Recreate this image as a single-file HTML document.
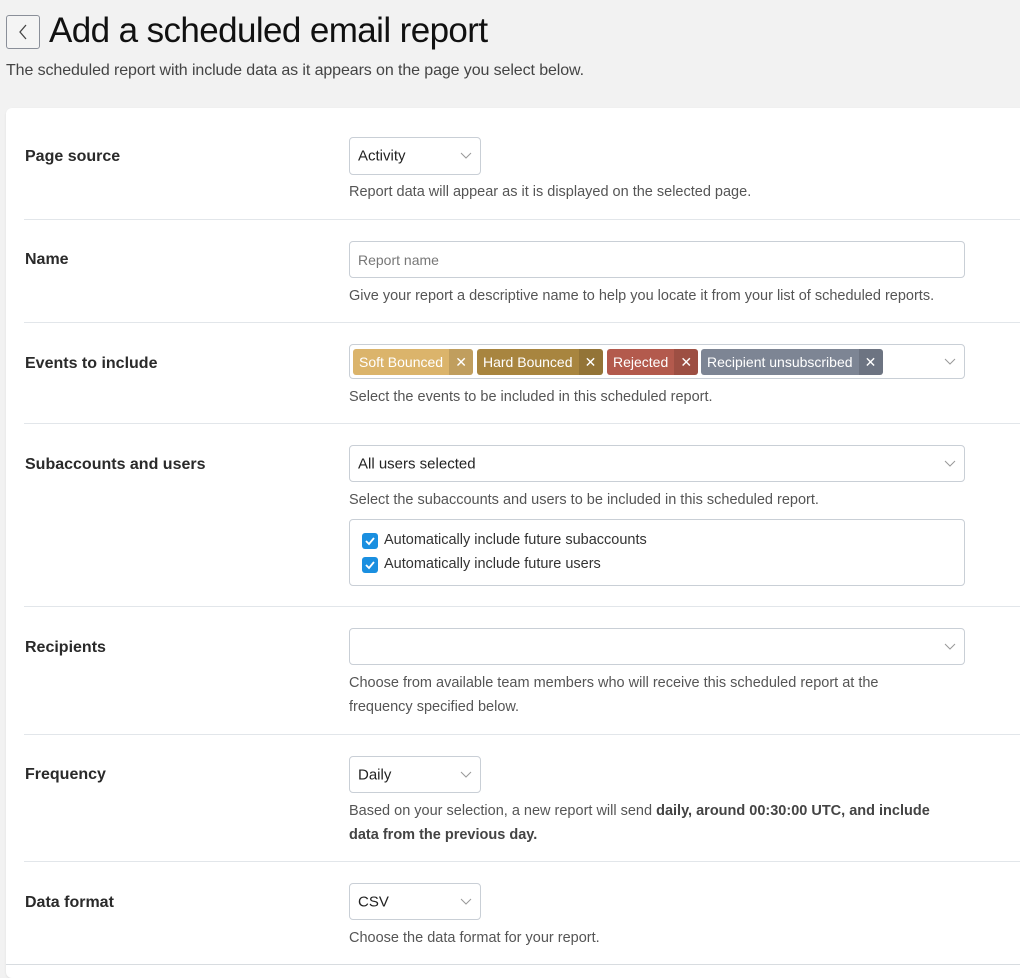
<!DOCTYPE html>
<html><head><style>
*{box-sizing:border-box;margin:0;padding:0}
body{width:1020px;height:969px;background:#f2f2f2;font-family:"Liberation Sans",sans-serif;color:#1c1c1c;position:relative;overflow:hidden}
.abs{position:absolute}
.back{left:6px;top:15px;width:34px;height:34px;border:1px solid #8a8f99;border-radius:3px;background:#f4f4f4}
h1{position:absolute;left:49px;top:11px;font-size:35px;font-weight:500;letter-spacing:-0.6px;color:#111}
.sub{left:6px;top:62px;font-size:16px;color:#444;letter-spacing:-0.1px}
.card{left:6px;top:108px;width:1030px;height:870px;background:#fff;border-radius:6px;box-shadow:0 1px 2px rgba(0,0,0,.08)}
.hr{position:absolute;left:24px;width:1000px;height:1px;background:#e2e6ea}
.lbl{position:absolute;left:25px;font-size:16px;font-weight:bold;color:#2a2a2a}
.help{position:absolute;left:349px;font-size:14.5px;color:#555;line-height:24px}
.help b{color:#444}
.box{position:absolute;left:349px;border:1px solid #c9cfd6;border-radius:4px;background:#fff;font-size:15px;color:#222}
.box .t{position:absolute;left:8px;top:50%;transform:translateY(-50%)}
.chev{position:absolute;right:8px;top:50%;width:12px;height:8px;margin-top:-4px}
.tag{position:absolute;top:4px;height:26px;border-radius:3px;color:#fff;font-size:14px;line-height:26px;overflow:hidden;display:flex}
.tag span{padding:0 6px}
.tag i{font-style:normal;width:24px;text-align:center;background:rgba(0,0,0,.12)}
.cb{position:absolute;left:12px;width:16px;height:16px;background:#1a8fe0;border-radius:3px}
</style></head><body>
<div class="abs back"><svg width="32" height="32" viewBox="0 0 32 32"><path d="M19 9l-6 7 6 7" fill="none" stroke="#444" stroke-width="1.3"/></svg></div>
<h1>Add a scheduled email report</h1>
<div class="abs sub">The scheduled report with include data as it appears on the page you select below.</div>
<div class="abs card"></div>

<div class="lbl" style="top:148px">Page source</div>
<div class="box" style="top:137px;width:132px;height:38px"><span class="t">Activity</span><svg class="chev" viewBox="0 0 12 8"><path d="M1 1l5 5 5-5" fill="none" stroke="#999"/></svg></div>
<div class="help" style="top:180px">Report data will appear as it is displayed on the selected page.</div>
<div class="hr" style="top:219px"></div>

<div class="lbl" style="top:251px">Name</div>
<div class="box" style="top:241px;width:616px;height:37px"><span class="t" style="color:#777;font-size:14px">Report name</span></div>
<div class="help" style="top:284px">Give your report a descriptive name to help you locate it from your list of scheduled reports.</div>
<div class="hr" style="top:322px"></div>

<div class="lbl" style="top:355px">Events to include</div>
<div class="box" style="top:344px;width:616px;height:35px">
<div class="tag" style="left:3px;background:#dbb46b"><span>Soft Bounced</span><i>✕</i></div>
<div class="tag" style="left:127px;background:#a8853f"><span>Hard Bounced</span><i>✕</i></div>
<div class="tag" style="left:257px;background:#b35a4d"><span>Rejected</span><i>✕</i></div>
<div class="tag" style="left:351px;background:#7d8594"><span>Recipient unsubscribed</span><i>✕</i></div>
<svg class="chev" viewBox="0 0 12 8"><path d="M1 1l5 5 5-5" fill="none" stroke="#999"/></svg></div>
<div class="help" style="top:385px">Select the events to be included in this scheduled report.</div>
<div class="hr" style="top:423px"></div>

<div class="lbl" style="top:456px">Subaccounts and users</div>
<div class="box" style="top:445px;width:616px;height:37px"><span class="t">All users selected</span><svg class="chev" viewBox="0 0 12 8"><path d="M1 1l5 5 5-5" fill="none" stroke="#999"/></svg></div>
<div class="help" style="top:488px">Select the subaccounts and users to be included in this scheduled report.</div>
<div class="box" style="top:519px;width:616px;height:67px;font-size:14.5px;color:#333">
<div class="cb" style="top:13px"><svg width="16" height="16"><path d="M4 8l3 3 5-6" fill="none" stroke="#fff" stroke-width="1.8"/></svg></div>
<div style="position:absolute;left:34px;top:12px">Automatically include future subaccounts</div>
<div class="cb" style="top:37px"><svg width="16" height="16"><path d="M4 8l3 3 5-6" fill="none" stroke="#fff" stroke-width="1.8"/></svg></div>
<div style="position:absolute;left:34px;top:36px">Automatically include future users</div>
</div>
<div class="hr" style="top:606px"></div>

<div class="lbl" style="top:639px">Recipients</div>
<div class="box" style="top:628px;width:616px;height:37px"><svg class="chev" viewBox="0 0 12 8"><path d="M1 1l5 5 5-5" fill="none" stroke="#999"/></svg></div>
<div class="help" style="top:671px;width:565px">Choose from available team members who will receive this scheduled report at the frequency specified below.</div>
<div class="hr" style="top:734px"></div>

<div class="lbl" style="top:766px">Frequency</div>
<div class="box" style="top:756px;width:132px;height:37px"><span class="t">Daily</span><svg class="chev" viewBox="0 0 12 8"><path d="M1 1l5 5 5-5" fill="none" stroke="#999"/></svg></div>
<div class="help" style="top:799px;width:600px">Based on your selection, a new report will send <b>daily, around 00:30:00 UTC, and include<br>data from the previous day.</b></div>
<div class="hr" style="top:861px"></div>

<div class="lbl" style="top:894px">Data format</div>
<div class="box" style="top:883px;width:132px;height:37px"><span class="t">CSV</span><svg class="chev" viewBox="0 0 12 8"><path d="M1 1l5 5 5-5" fill="none" stroke="#999"/></svg></div>
<div class="help" style="top:926px">Choose the data format for your report.</div>
<div class="hr" style="top:964px;left:6px;width:1020px;background:#d8dce0"></div>
</body></html>
